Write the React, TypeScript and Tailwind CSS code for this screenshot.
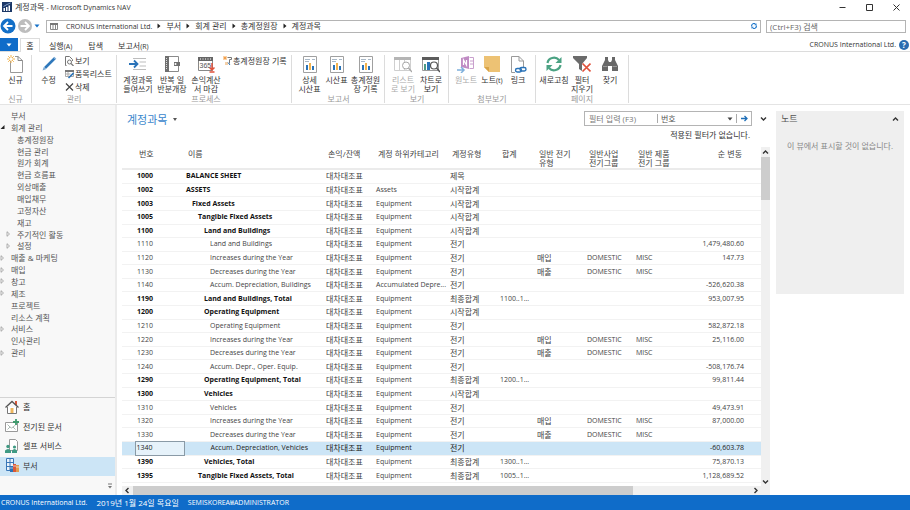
import React from 'react';
import type { ReactNode } from 'react';

/* ---------- small helpers ---------- */

function Latin({ children }: { children: ReactNode }) {
  return <span className="text-[7px]">{children}</span>;
}

function Caret({ className }: { className: string }) {
  return (
    <svg className={className} width="6" height="4" viewBox="0 0 6 4" aria-hidden="true">
      <path d="M0.5 0.5h5L3 3.5z" fill="currentColor" />
    </svg>
  );
}

type Direction = 'up' | 'down' | 'left' | 'right';

const chevronPaths: Record<Direction, string> = {
  up: 'M1 4.5L3.5 2L6 4.5',
  down: 'M1 2.5L3.5 5L6 2.5',
  left: 'M4.5 1L2 3.5L4.5 6',
  right: 'M2.5 1L5 3.5L2.5 6',
};

function Chevron({ dir }: { dir: Direction }) {
  return (
    <svg width="7" height="7" viewBox="0 0 7 7" fill="none" stroke="#333" strokeWidth="1.4" aria-hidden="true">
      <path d={chevronPaths[dir]} />
    </svg>
  );
}

/* ---------- ribbon icons ---------- */

function Icon({ children }: { children: ReactNode }) {
  return (
    <svg className="shrink-0" width="18" height="18" viewBox="0 0 18 18" fill="none" aria-hidden="true">
      {children}
    </svg>
  );
}

function NewIcon() {
  return (
    <Icon>
      <path d="M3.5 6v11.5h12V5.5L11 1.500H8" stroke="#999" />
      <path d="M11 1.500V5.500h4.500" stroke="#888" />
      <path d="M4 0v8M0 4h8M1.200 1.200l5.600 5.600M6.800 1.200L1.200 6.800" stroke="#f2b24c" strokeWidth="1" />
      <circle cx="4" cy="4" r="1.500" fill="#fff" />
    </Icon>
  );
}

function EditIcon() {
  return (
    <Icon>
      <path d="M5 13L14.500 3.500" stroke="#2f78bb" strokeWidth="2.600" />
      <path d="M2.500 15.500l1.200-3.500 2.300 2.300z" fill="#7aa9d4" />
      <path d="M13.800 2.200l2 2" stroke="#7aa9d4" strokeWidth="1.400" />
    </Icon>
  );
}

function IndentIcon() {
  return (
    <Icon>
      <path d="M0 9h8M5 5.500L8.500 9L5 12.500" stroke="#2a73b8" strokeWidth="1.800" />
      <path d="M4 3.500h13M10.500 7h6.500M10.500 11h6.500M4 14.500h13" stroke="#bdbdbd" strokeWidth="1.200" />
    </Icon>
  );
}

function JournalIcon() {
  return (
    <Icon>
      <path d="M2.500 1.500h13v15h-13z" stroke="#8a8a8a" />
      <path d="M2 1h4v16H2z" fill="#6f6f6f" />
      <path d="M3.500 3v12" stroke="#ddd" strokeDasharray="1 1" />
      <path d="M11 7h6v4h-6z" fill="#6f6f6f" />
      <circle cx="12.500" cy="9" r="1" fill="#fff" />
    </Icon>
  );
}

function CalendarIcon() {
  return (
    <Icon>
      <path d="M1.500 3.500h14v12h-14z" stroke="#888" />
      <path d="M1 2h15v4H1z" fill="#666" />
      <path d="M3 4h11" stroke="#fff" strokeDasharray="1 1.500" />
      <text x="2.500" y="13" fontSize="7" fontFamily="Liberation Sans, sans-serif" fill="#555">
        365
      </text>
      <path d="M15 8v7M12.500 12.500L15 15l2.500-2.500M12.500 17h5" stroke="#e0503a" strokeWidth="1.500" />
    </Icon>
  );
}

function ReportIcon() {
  return (
    <Icon>
      <path d="M2.500 1.500h13v16h-13z" stroke="#a0a0a0" />
      <path d="M4 4.500h5M11 4.500h3M4 6.500h4" stroke="#a9b8c6" />
      <path d="M5 10h2v5H5z" fill="#2a73b8" />
      <path d="M8 8h2v7H8z" fill="#f2b24c" />
      <path d="M11 11h2v4h-2z" fill="#2a73b8" />
    </Icon>
  );
}

function ListViewIcon() {
  return (
    <Icon>
      <path d="M0.500 2.500h16v13H.500zM5.500 5v10M10.500 5v10" stroke="#cfcfcf" />
      <path d="M0 2h17v3H0z" fill="#b5b5b5" />
      <circle cx="12" cy="10.500" r="3.500" fill="#fff" stroke="#a8a8a8" />
      <path d="M14.500 13L18 17" stroke="#a8a8a8" strokeWidth="1.300" />
    </Icon>
  );
}

function ChartViewIcon() {
  return (
    <Icon>
      <path d="M0.500 2.500h16v13H.500z" stroke="#9a9a9a" />
      <path d="M0 2h17v3H0z" fill="#5c5c5c" />
      <path d="M2 9h2v6H2z" fill="#4e9c86" />
      <path d="M5 7h3v8H5z" fill="#2a73b8" />
      <circle cx="12" cy="10.500" r="3.500" fill="#fff" stroke="#555" strokeWidth="1.200" />
      <path d="M14.500 13L18 17" stroke="#555" strokeWidth="1.500" />
    </Icon>
  );
}

function OneNoteIcon() {
  return (
    <Icon>
      <path d="M4 3l8-2v13l-8-2z" fill="#c08cc4" />
      <path d="M6.500 10V5l3 5V5" stroke="#fff" strokeWidth="1.200" />
      <path d="M12.500 2.500h4v11h-4M13 6h4M13 9h4" stroke="#c9a0cd" />
      <path d="M0 15h6M4 12l3 3-3 3" stroke="#7fb0dc" strokeWidth="1.500" />
    </Icon>
  );
}

function NoteIcon() {
  return (
    <Icon>
      <path d="M1 1h16v16H6l-5-5z" fill="#edc274" />
      <path d="M1 12h5v5z" fill="#d9a448" />
    </Icon>
  );
}

function LinkIcon() {
  return (
    <Icon>
      <path d="M6 17.500H2.500v-16H10L14.500 6v6" stroke="#9a9a9a" />
      <path d="M10 1.500V6h4.500" stroke="#9a9a9a" />
      <rect x="6.500" y="13.500" width="6" height="3.500" rx="1.700" stroke="#2a73b8" strokeWidth="1.400" />
      <rect x="11" y="12.500" width="6" height="3.500" rx="1.700" stroke="#2a73b8" strokeWidth="1.400" />
    </Icon>
  );
}

function RefreshIcon() {
  return (
    <Icon>
      <path d="M2.500 8a6.500 6 0 0 1 11.500-3" stroke="#4ba283" strokeWidth="2.200" />
      <path d="M16.500 2v6h-6z" fill="#4ba283" />
      <path d="M15.500 10a6.500 6 0 0 1-11.500 3" stroke="#4ba283" strokeWidth="2.200" />
      <path d="M1.500 16v-6h6z" fill="#4ba283" />
    </Icon>
  );
}

function ClearFilterIcon() {
  return (
    <Icon>
      <path d="M0 1h14v2L9 9v7l-3-2V9L0 3z" fill="#6b6b6b" />
      <path d="M9.500 8.500l8 8M17.500 8.500l-8 8" stroke="#e0503a" strokeWidth="1.700" />
    </Icon>
  );
}

function FindIcon() {
  return (
    <Icon>
      <path d="M4 2h3v3l1 2h2l1-2V2h3v3l3 6v5h-6v-5H7v5H1v-5l3-6z" fill="#686868" />
      <path d="M2 11.500h4.500M11.500 11.500H16" stroke="#999" />
    </Icon>
  );
}

function ViewSmallIcon() {
  return (
    <svg width="9" height="10" viewBox="0 0 9 10" fill="none" stroke="#777" aria-hidden="true">
      <path d="M1.500 9.500h-1v-9h4l3 3V5" />
      <circle cx="4.500" cy="6" r="2" />
      <path d="M6 7.500l2.500 2.500" strokeWidth="1.200" />
    </svg>
  );
}

function EditListSmallIcon() {
  return (
    <svg width="9" height="10" viewBox="0 0 9 10" fill="none" aria-hidden="true">
      <path d="M0.500 1.500h8v6h-8zM0.500 5h5M3 3v4" stroke="#aaa" />
      <path d="M0 1h9v2H0z" fill="#777" />
      <path d="M3.500 9L8.500 4" stroke="#2a73b8" strokeWidth="1.600" />
    </svg>
  );
}

function DeleteSmallIcon() {
  return (
    <svg width="9" height="10" viewBox="0 0 9 10" fill="none" stroke="#444" strokeWidth="1.200" aria-hidden="true">
      <path d="M1 1.500l7 7M8 1.500l-7 7" />
    </svg>
  );
}

function LedgerSmallIcon() {
  return (
    <svg width="9" height="10" viewBox="0 0 9 10" fill="none" aria-hidden="true">
      <path d="M4.500 1.500h4v2h-2v4" stroke="#777" />
      <path d="M0 2h4M2 0v4M.500 .500l3 3M3.500 .500l-3 3" stroke="#f2a04c" />
      <path d="M2 6h3v3H2z" fill="#f5d0a8" />
      <path d="M5 6.500l2 2.500" stroke="#2a73b8" />
    </svg>
  );
}

/* ---------- ribbon ---------- */

interface RibbonButtonProps {
  icon: ReactNode;
  width: string;
  lines: ReactNode[];
  disabled?: boolean;
}

function RibbonButton({ icon, width, lines, disabled }: RibbonButtonProps) {
  return (
    <button
      type="button"
      disabled={disabled}
      className={`flex flex-col items-center whitespace-nowrap leading-[9px] ${width} ${disabled ? 'text-[#aaa]' : 'text-[#333]'}`}
    >
      {icon}
      <span className="mt-[2px]">
        {lines.map((line, i) => (
          <span key={i} className="block">
            {line}
          </span>
        ))}
      </span>
    </button>
  );
}

function SmallButton({ icon, label }: { icon: ReactNode; label: string }) {
  return (
    <button type="button" className="flex h-[13px] items-center gap-[1px] whitespace-nowrap leading-[10px] text-[#333]">
      {icon}
      {label}
    </button>
  );
}

function RibbonGroup({ label, className, children }: { label: string; className: string; children: ReactNode }) {
  return (
    <div className={`mt-[3px] mb-[1px] flex flex-col justify-between border-r border-[#dcdcdc] ${className}`}>
      <div className="flex">{children}</div>
      <div className="text-center leading-[9px] text-[#999]">{label}</div>
    </div>
  );
}

function Ribbon() {
  return (
    <div className="flex h-[53px] shrink-0 border-b border-[#e4e4e4]">
      <RibbonGroup label="신규" className="w-[32px]">
        <RibbonButton icon={<NewIcon />} width="w-[31px]" lines={['신규']} />
      </RibbonGroup>
      <RibbonGroup label="관리" className="w-[85px]">
        <RibbonButton icon={<EditIcon />} width="w-[33px]" lines={['수정']} />
        <div className="-mt-[1px] flex flex-col">
          <SmallButton icon={<ViewSmallIcon />} label="보기" />
          <SmallButton icon={<EditListSmallIcon />} label="품목리스트" />
          <SmallButton icon={<DeleteSmallIcon />} label="삭제" />
        </div>
      </RibbonGroup>
      <RibbonGroup label="프로세스" className="w-[175px] pl-1">
        <RibbonButton icon={<IndentIcon />} width="w-[34px]" lines={['계정과목', '들여쓰기']} />
        <RibbonButton icon={<JournalIcon />} width="w-[34px]" lines={['반복 일', '반분개장']} />
        <RibbonButton icon={<CalendarIcon />} width="w-[34px]" lines={['손익계산', '서 마감']} />
        <div className="-mt-[1px]">
          <SmallButton icon={<LedgerSmallIcon />} label="총계정원장 기록" />
        </div>
      </RibbonGroup>
      <RibbonGroup label="보고서" className="pr-[3px] pl-1">
        <RibbonButton icon={<ReportIcon />} width="w-[27px]" lines={['상세', '시산표']} />
        <RibbonButton icon={<ReportIcon />} width="w-[27px]" lines={['시산표']} />
        <RibbonButton icon={<ReportIcon />} width="w-[31px]" lines={['총계정원', '장 기록']} />
      </RibbonGroup>
      <RibbonGroup label="보기" className="pr-[3px] pl-1">
        <RibbonButton icon={<ListViewIcon />} width="w-[28px]" lines={['리스트', '로 보기']} disabled />
        <RibbonButton icon={<ChartViewIcon />} width="w-[28px]" lines={['차트로', '보기']} />
      </RibbonGroup>
      <RibbonGroup label="첨부보기" className="px-1">
        <RibbonButton icon={<OneNoteIcon />} width="w-[26px]" lines={['원노트']} disabled />
        <RibbonButton
          icon={<NoteIcon />}
          width="w-[26px]"
          lines={[
            <>
              노트<Latin>(t)</Latin>
            </>,
          ]}
        />
        <RibbonButton icon={<LinkIcon />} width="w-[26px]" lines={['링크']} />
      </RibbonGroup>
      <RibbonGroup label="페이지" className="px-1">
        <RibbonButton icon={<RefreshIcon />} width="w-[28px]" lines={['새로고침']} />
        <RibbonButton icon={<ClearFilterIcon />} width="w-[28px]" lines={['필터', '지우기']} />
        <RibbonButton icon={<FindIcon />} width="w-[28px]" lines={['찾기']} />
      </RibbonGroup>
    </div>
  );
}

/* ---------- window header ---------- */

function TitleBar() {
  return (
    <header className="flex h-[14px] shrink-0 items-center pl-[2px] leading-[12px] text-[#333]">
      <svg className="mr-[3px]" width="10" height="10" viewBox="0 0 10 10" aria-hidden="true">
        <path d="M0 0h10v10H0z" fill="#1b3766" />
        <path d="M1.500 6h1.500v3H1.500zM4 5h1.500v4H4zM6.500 3.500H8V9H6.500z" fill="#fff" />
        <path d="M1.500 4.500L5 2.500L8.500 1" stroke="#9db7dd" strokeWidth=".8" fill="none" />
      </svg>
      <h1 className="flex-1">
        계정과목 <Latin>- Microsoft Dynamics NAV</Latin>
      </h1>
      <button type="button" aria-label="최소화" className="flex w-[27px] justify-center">
        <svg width="7" height="7" viewBox="0 0 7 7" stroke="#333" fill="none">
          <path d="M.500 3.500h6" />
        </svg>
      </button>
      <button type="button" aria-label="최대화" className="flex w-[27px] justify-center">
        <svg width="7" height="7" viewBox="0 0 7 7" stroke="#333" fill="none">
          <path d="M.500 .500h6v6h-6z" />
        </svg>
      </button>
      <button type="button" aria-label="닫기" className="flex w-[27px] justify-center">
        <svg width="7" height="7" viewBox="0 0 7 7" stroke="#333" fill="none">
          <path d="M.500 .500l6 6M6.500 .500l-6 6" />
        </svg>
      </button>
    </header>
  );
}

function CrumbArrow() {
  return (
    <svg className="mx-[5px]" width="4" height="6" viewBox="0 0 4 6" aria-hidden="true">
      <path d="M.500 .500L3.500 3L.500 5.500z" fill="#222" />
    </svg>
  );
}

const crumbs = ['부서', '회계 관리', '총계정원장', '계정과목'];

function AddressBar() {
  return (
    <div className="flex h-[24px] shrink-0 items-center pr-1">
      <button type="button" aria-label="뒤로">
        <svg width="16" height="16" viewBox="0 0 16 16" fill="none">
          <circle cx="8" cy="8" r="7.500" fill="#1470c8" />
          <path d="M12.500 8h-8M8 4L4 8l4 4" stroke="#fff" strokeWidth="1.800" />
        </svg>
      </button>
      <button type="button" aria-label="앞으로" className="ml-[1px]">
        <svg width="16" height="16" viewBox="0 0 16 16" fill="none">
          <circle cx="8" cy="8" r="7" fill="#bdbdbd" />
          <path d="M3.500 8h8M8 4l4 4-4 4" stroke="#fff" strokeWidth="1.800" />
        </svg>
      </button>
      <Caret className="ml-[1px] text-[#1470c8]" />
      <nav className="ml-[6px] flex h-[13px] flex-1 items-center border border-[#b4b4b4] leading-[10px] text-[#333]">
        <svg className="mr-[8px] ml-[3px]" width="8" height="7" viewBox="0 0 8 7" fill="none" aria-hidden="true">
          <path d="M.500 .500h7v6h-7zM3 2v4M5.500 2v4" stroke="#888" />
          <path d="M0 0h8v2H0z" fill="#777" />
        </svg>
        <a href="#company">
          <Latin>CRONUS International Ltd.</Latin>
        </a>
        {crumbs.map((crumb) => (
          <React.Fragment key={crumb}>
            <CrumbArrow />
            <a href="#crumb">{crumb}</a>
          </React.Fragment>
        ))}
        <button type="button" aria-label="새로 고침" className="mr-[3px] ml-auto">
          <svg width="6" height="6" viewBox="0 0 6 6" fill="none" stroke="#1470c8" strokeWidth="1.100">
            <path d="M.800 3.500A2.200 2.200 0 0 1 4.500 1.300M5.200 2.500A2.200 2.200 0 0 1 1.500 4.700" />
            <path d="M5.500 .200v2h-2zM.500 5.800v-2h2z" fill="#1470c8" stroke="none" />
          </svg>
        </button>
      </nav>
      <input
        type="search"
        aria-label="검색"
        placeholder="(Ctrl+F3) 검색"
        className="ml-[5px] h-[13px] w-[140px] border border-[#b4b4b4] px-[3px] text-[8px] leading-[10px] outline-none placeholder:text-[#666]"
      />
    </div>
  );
}

function TabRow() {
  return (
    <div className="flex h-[14px] shrink-0 items-stretch border-b border-[#dcdcdc] leading-[12px] text-[#333]">
      <button type="button" aria-label="파일" className="flex w-[18px] items-center justify-center bg-[#0f6cc9] text-white">
        <Caret className="" />
      </button>
      <button type="button" className="-mb-px ml-[2px] w-[20px] border-x border-t border-[#dcdcdc] bg-white">
        홈
      </button>
      <button type="button" className="ml-[9px] pt-[2px]">
        실행<Latin>(A)</Latin>
      </button>
      <button type="button" className="ml-[16px] pt-[2px]">
        탐색
      </button>
      <button type="button" className="ml-[15px] pt-[2px]">
        보고서<Latin>(R)</Latin>
      </button>
      <div className="ml-auto flex items-center gap-[3px] pt-[1px] pr-[1px]">
        <Latin>CRONUS International Ltd.</Latin>
        <button type="button" aria-label="도움말" className="flex size-[10px] items-center justify-center rounded-full bg-[#2b6cb0] text-[8px] font-bold leading-[10px] text-white">
          ?
        </button>
      </div>
    </div>
  );
}

/* ---------- navigation pane ---------- */

interface TreeNode {
  label: string;
  level: 0 | 1;
  state?: 'open' | 'closed';
}

const tree: TreeNode[] = [
  { label: '부서', level: 0 },
  { label: '회계 관리', level: 0, state: 'open' },
  { label: '총계정원장', level: 1 },
  { label: '현금 관리', level: 1 },
  { label: '원가 회계', level: 1 },
  { label: '현금 흐름표', level: 1 },
  { label: '외상매출', level: 1 },
  { label: '매입채무', level: 1 },
  { label: '고정자산', level: 1 },
  { label: '재고', level: 1 },
  { label: '주기적인 활동', level: 1, state: 'closed' },
  { label: '설정', level: 1, state: 'closed' },
  { label: '매출 & 마케팅', level: 0, state: 'closed' },
  { label: '매입', level: 0, state: 'closed' },
  { label: '창고', level: 0, state: 'closed' },
  { label: '제조', level: 0, state: 'closed' },
  { label: '프로젝트', level: 0 },
  { label: '리소스 계획', level: 0 },
  { label: '서비스', level: 0, state: 'closed' },
  { label: '인사관리', level: 0 },
  { label: '관리', level: 0, state: 'closed' },
];

function Expander({ state }: { state?: 'open' | 'closed' }) {
  return (
    <svg className="mr-[6px] shrink-0" width="5" height="6" viewBox="0 0 5 6" fill="none" aria-hidden="true">
      {state === 'open' && <path d="M4.500 1v4h-4z" fill="#222" />}
      {state === 'closed' && <path d="M1 .700L3.500 3L1 5.300z" stroke="#999" strokeWidth=".8" />}
    </svg>
  );
}

function HomeIcon() {
  return (
    <svg width="14" height="14" viewBox="0 0 14 14" fill="none" aria-hidden="true">
      <path d="M2.500 7v6.500h9V7" stroke="#777" fill="#fff" />
      <path d="M10 1h2v4h-2z" fill="#d9583b" />
      <path d="M.500 7.500L7 1.500l6.500 6" stroke="#555" strokeWidth="1.300" />
      <path d="M5.500 8h3v5h-3z" fill="#edb75e" />
    </svg>
  );
}

function PostedIcon() {
  return (
    <svg width="14" height="14" viewBox="0 0 14 14" fill="none" aria-hidden="true">
      <path d="M.500 3.500h12v9H.500z" stroke="#999" fill="#fff" />
      <path d="M2.500 5.500l2.500 2.500-2.500 2.500M10.500 6L8 8l2.500 2.500M5 8l1.500 1L8 8" stroke="#a9b8b2" />
      <path d="M11 0v6M8 3h6" stroke="#3f9a6d" strokeWidth="1.800" />
    </svg>
  );
}

function SelfServiceIcon() {
  return (
    <svg width="14" height="14" viewBox="0 0 14 14" fill="none" aria-hidden="true">
      <path d="M4.500 .500h6l2 2v9h-8z" stroke="#999" fill="#fff" />
      <circle cx="3" cy="7.500" r="1.700" fill="#3f9a83" />
      <path d="M0 14v-2.500q3-3 6 0V14z" fill="#3f9a83" />
      <circle cx="9.500" cy="8" r="1.600" fill="#3f9a83" />
      <path d="M7 14v-2.500q2.500-3 5 0V14z" fill="#3f9a83" />
    </svg>
  );
}

function DepartmentsIcon() {
  return (
    <svg width="14" height="14" viewBox="0 0 14 14" fill="none" aria-hidden="true">
      <path d="M1.500 .500h7v12h-7z" stroke="#3a78b8" fill="#e9f2fa" />
      <path d="M1 4.500h8M1 8.500h8M5 1v11" stroke="#3a78b8" />
      <path d="M5 8h3v6H5z" fill="#2a73b8" />
      <path d="M8 6h3v8H8z" fill="#d9583b" />
      <path d="M11 7h3v7h-3z" fill="#e39b4f" />
      <path d="M5 10h3M8 8h3M11 9h3" stroke="#fff" strokeWidth=".6" />
    </svg>
  );
}

const areas = [
  { label: '홈', icon: <HomeIcon />, active: false },
  { label: '전기된 문서', icon: <PostedIcon />, active: false },
  { label: '셀프 서비스', icon: <SelfServiceIcon />, active: false },
  { label: '부서', icon: <DepartmentsIcon />, active: true },
];

function Sidebar() {
  return (
    <aside className="flex w-[117px] shrink-0 flex-col border-r-2 border-[#ebebeb] bg-[#f8f8f8] leading-[11px]">
      <ul className="mt-[5px] grid h-[249px] shrink-0 auto-rows-fr text-[#555]">
        {tree.map((node, i) => (
          <li key={i} className={node.level === 1 ? 'pl-[6px]' : ''}>
            <a href="#node" className="flex items-center">
              <Expander state={node.state} />
              {node.label}
            </a>
          </li>
        ))}
      </ul>
      <div className="flex-1" />
      <div className="grid h-[79px] shrink-0 auto-rows-fr border-t border-[#d4d4d4] text-[#333]">
        {areas.map((area) => (
          <button
            key={area.label}
            type="button"
            className={`flex items-center gap-[4px] pb-[2px] pl-[5px] ${area.active ? 'bg-[#cce5f6]' : ''}`}
          >
            {area.icon}
            {area.label}
          </button>
        ))}
      </div>
      <div className="flex h-[19px] shrink-0 items-center justify-end pr-[2px]">
        <button type="button" aria-label="구성">
          <svg width="6" height="6" viewBox="0 0 6 6" fill="none" aria-hidden="true">
            <path d="M1 1h4" stroke="#777" />
            <path d="M1 3h4L3 5.500z" fill="#777" />
          </svg>
        </button>
      </div>
    </aside>
  );
}

/* ---------- chart of accounts ---------- */

interface Account {
  no: string;
  name: string;
  indent: 0 | 1 | 2 | 3 | 4;
  sub?: string;
  type: string;
  total?: string;
  posting?: '매입' | '매출';
  net?: string;
}

const accounts: Account[] = [
  { no: '1000', name: 'BALANCE SHEET', indent: 0, type: '제목' },
  { no: '1002', name: 'ASSETS', indent: 0, sub: 'Assets', type: '시작합계' },
  { no: '1003', name: 'Fixed Assets', indent: 1, sub: 'Equipment', type: '시작합계' },
  { no: '1005', name: 'Tangible Fixed Assets', indent: 2, sub: 'Equipment', type: '시작합계' },
  { no: '1100', name: 'Land and Buildings', indent: 3, sub: 'Equipment', type: '시작합계' },
  { no: '1110', name: 'Land and Buildings', indent: 4, sub: 'Equipment', type: '전기', net: '1,479,480.60' },
  { no: '1120', name: 'Increases during the Year', indent: 4, sub: 'Equipment', type: '전기', posting: '매입', net: '147.73' },
  { no: '1130', name: 'Decreases during the Year', indent: 4, sub: 'Equipment', type: '전기', posting: '매출' },
  { no: '1140', name: 'Accum. Depreciation, Buildings', indent: 4, sub: 'Accumulated Depre...', type: '전기', net: '-526,620.38' },
  { no: '1190', name: 'Land and Buildings, Total', indent: 3, sub: 'Equipment', type: '최종합계', total: '1100..1...', net: '953,007.95' },
  { no: '1200', name: 'Operating Equipment', indent: 3, sub: 'Equipment', type: '시작합계' },
  { no: '1210', name: 'Operating Equipment', indent: 4, sub: 'Equipment', type: '전기', net: '582,872.18' },
  { no: '1220', name: 'Increases during the Year', indent: 4, sub: 'Equipment', type: '전기', posting: '매입', net: '25,116.00' },
  { no: '1230', name: 'Decreases during the Year', indent: 4, sub: 'Equipment', type: '전기', posting: '매출' },
  { no: '1240', name: 'Accum. Depr., Oper. Equip.', indent: 4, sub: 'Equipment', type: '전기', net: '-508,176.74' },
  { no: '1290', name: 'Operating Equipment, Total', indent: 3, sub: 'Equipment', type: '최종합계', total: '1200..1...', net: '99,811.44' },
  { no: '1300', name: 'Vehicles', indent: 3, sub: 'Equipment', type: '시작합계' },
  { no: '1310', name: 'Vehicles', indent: 4, sub: 'Equipment', type: '전기', net: '49,473.91' },
  { no: '1320', name: 'Increases during the Year', indent: 4, sub: 'Equipment', type: '전기', posting: '매입', net: '87,000.00' },
  { no: '1330', name: 'Decreases during the Year', indent: 4, sub: 'Equipment', type: '전기', posting: '매출' },
  { no: '1340', name: 'Accum. Depreciation, Vehicles', indent: 4, sub: 'Equipment', type: '전기', net: '-60,603.78' },
  { no: '1390', name: 'Vehicles, Total', indent: 3, sub: 'Equipment', type: '최종합계', total: '1300..1...', net: '75,870.13' },
  { no: '1395', name: 'Tangible Fixed Assets, Total', indent: 2, sub: 'Equipment', type: '최종합계', total: '1005..1...', net: '1,128,689.52' },
];

const indents = ['pl-[2px]', 'pl-[8px]', 'pl-[14px]', 'pl-[20px]', 'pl-[26px]'];

const selectedNo = '1340';

function AccountRow({ account }: { account: Account }) {
  const selected = account.no === selectedNo;
  const heading = account.indent < 4;
  const tone = selected ? 'bg-[#cce5f6] text-[#222]' : 'text-[#444]';
  const weight = heading ? 'font-bold text-[#111]' : '';
  const box = selected ? 'border border-[#8a9aa6] bg-[#e6f2fa] pl-[1px]' : 'pl-[2px]';
  return (
    <tr className={`border-b border-[#f2f2f2] ${tone}`}>
      <td />
      <td className={`text-[7px] ${weight} ${box}`}>{account.no}</td>
      <td className={`text-[7px] ${weight} ${indents[account.indent]}`}>{account.name}</td>
      <td className="pl-[2px]">대차대조표</td>
      <td className="truncate pl-[2px] text-[7px]">{account.sub}</td>
      <td className="pl-[2px]">{account.type}</td>
      <td className="pl-[2px] text-[7px]">{account.total}</td>
      <td className="pl-[2px]">{account.posting}</td>
      <td className="pl-[2px] text-[7px]">{account.posting && 'DOMESTIC'}</td>
      <td className="pl-[2px] text-[7px]">{account.posting && 'MISC'}</td>
      <td className="pr-[17px] text-right text-[7px]">{account.net}</td>
    </tr>
  );
}

function AccountTable() {
  return (
    <table className="h-full w-full table-fixed border-collapse whitespace-nowrap leading-[10px]">
      <colgroup>
        <col className="w-[13px]" />
        <col className="w-[49px]" />
        <col className="w-[140px]" />
        <col className="w-[50px]" />
        <col className="w-[74px]" />
        <col className="w-[50px]" />
        <col className="w-[37px]" />
        <col className="w-[50px]" />
        <col className="w-[49px]" />
        <col className="w-[50px]" />
        <col />
      </colgroup>
      <thead>
        <tr className="h-[22px] border-b-2 border-[#ebebeb] text-left align-top leading-[9px] text-[#444] *:pt-[2px] *:pl-[4px] *:font-normal">
          <th />
          <th>번호</th>
          <th>이름</th>
          <th>손익/잔액</th>
          <th>계정 하위카테고리</th>
          <th>계정유형</th>
          <th>합계</th>
          <th>
            일반 전기
            <br />
            유형
          </th>
          <th>
            일반사업
            <br />
            전기그룹
          </th>
          <th>
            일반 제품
            <br />
            전기 그룹
          </th>
          <th className="pr-[19px] text-right">순 변동</th>
        </tr>
      </thead>
      <tbody>
        {accounts.map((account) => (
          <AccountRow key={account.no} account={account} />
        ))}
      </tbody>
    </table>
  );
}

function FilterBox() {
  return (
    <div className="flex h-[15px] w-[168px] items-center border border-[#b4b4b4] leading-[10px] text-[#555]">
      <input
        type="text"
        aria-label="필터 입력"
        placeholder="필터 입력 (F3)"
        className="w-[72px] px-[4px] text-[8px] outline-none placeholder:text-[#777]"
      />
      <span className="flex h-[9px] flex-1 items-center border-x border-[#aaa]">
        <select aria-label="필터 필드" className="min-w-0 flex-1 appearance-none pl-[3px] text-[8px] leading-[10px] outline-none">
          <option>번호</option>
        </select>
        <Caret className="mr-[3px] text-[#444]" />
      </span>
      <button type="button" aria-label="필터 적용" className="flex w-[14px] justify-center">
        <svg width="7" height="7" viewBox="0 0 7 7" fill="none" stroke="#1f6fb8" strokeWidth="1.300" aria-hidden="true">
          <path d="M0 3.500h6M3.500 1L6 3.500L3.500 6" />
        </svg>
      </button>
    </div>
  );
}

function AccountsPane() {
  return (
    <main className="flex min-w-0 flex-1 flex-col pt-[6px] pl-[5px]">
      <div className="flex h-[15px] shrink-0 items-center pl-[5px]">
        <h2 className="pt-[1px] text-[11px] leading-[15px] text-[#3a86cc]">계정과목</h2>
        <svg className="mt-[2px] ml-[6px]" width="4" height="3" viewBox="0 0 4 3" aria-hidden="true">
          <path d="M0 0h4L2 3z" fill="#555" />
        </svg>
        <div className="ml-auto">
          <FilterBox />
        </div>
        <button type="button" aria-label="필터 펼치기" className="ml-[4px] flex w-[14px] justify-center">
          <Chevron dir="down" />
        </button>
      </div>
      <p className="mt-[3px] mb-[6px] shrink-0 pr-[20px] text-right leading-[12px] text-[#333]">적용된 필터가 없습니다.</p>
      <div className="flex min-h-0 flex-1">
        <div className="flex min-w-0 flex-1 flex-col">
          <div className="min-h-0 flex-1">
            <AccountTable />
          </div>
          <div className="mt-[3px] flex h-[9px] shrink-0 items-center bg-[#f0f0f0]">
            <span className="flex w-[11px] justify-center">
              <Chevron dir="left" />
            </span>
            <span className="h-full flex-1">
              <span className="block h-full w-[81%] bg-[#cdcdcd]" />
            </span>
            <span className="flex w-[11px] justify-center">
              <Chevron dir="right" />
            </span>
          </div>
        </div>
        <div className="flex w-[9px] shrink-0 flex-col items-center bg-[#f0f0f0] pb-[9px]">
          <span className="flex h-[10px] items-center">
            <Chevron dir="up" />
          </span>
          <span className="h-[43px] w-full bg-[#cdcdcd]" />
          <span className="mt-auto flex h-[10px] items-center">
            <Chevron dir="down" />
          </span>
        </div>
      </div>
    </main>
  );
}

function NotesPane() {
  return (
    <aside className="mx-[6px] mt-[6px] h-[183px] w-[128px] shrink-0 bg-[#efefef]">
      <div className="flex h-[16px] items-center justify-between px-[5px]">
        <h3 className="text-[9px] leading-[12px] text-[#555]">노트</h3>
        <button type="button" aria-label="접기">
          <Chevron dir="up" />
        </button>
      </div>
      <p className="mt-[13px] text-center leading-[12px] text-[#888]">이 뷰에서 표시할 것이 없습니다.</p>
    </aside>
  );
}

export default function App() {
  return (
    <div
      lang="ko"
      className="flex h-screen flex-col overflow-hidden bg-white font-['Open_Sans','Noto_Sans_CJK_KR',sans-serif] text-[8px]"
    >
      <TitleBar />
      <AddressBar />
      <TabRow />
      <Ribbon />
      <div className="flex min-h-0 flex-1">
        <Sidebar />
        <AccountsPane />
        <NotesPane />
      </div>
      <footer className="flex h-[15px] shrink-0 items-center gap-[9px] bg-[#0f6cc9] pl-[1px] leading-[12px] text-white">
        <Latin>CRONUS International Ltd.</Latin>
        <span>2019년 1월 24일 목요일</span>
        <Latin>SEMISKOREA₩ADMINISTRATOR</Latin>
      </footer>
    </div>
  );
}
